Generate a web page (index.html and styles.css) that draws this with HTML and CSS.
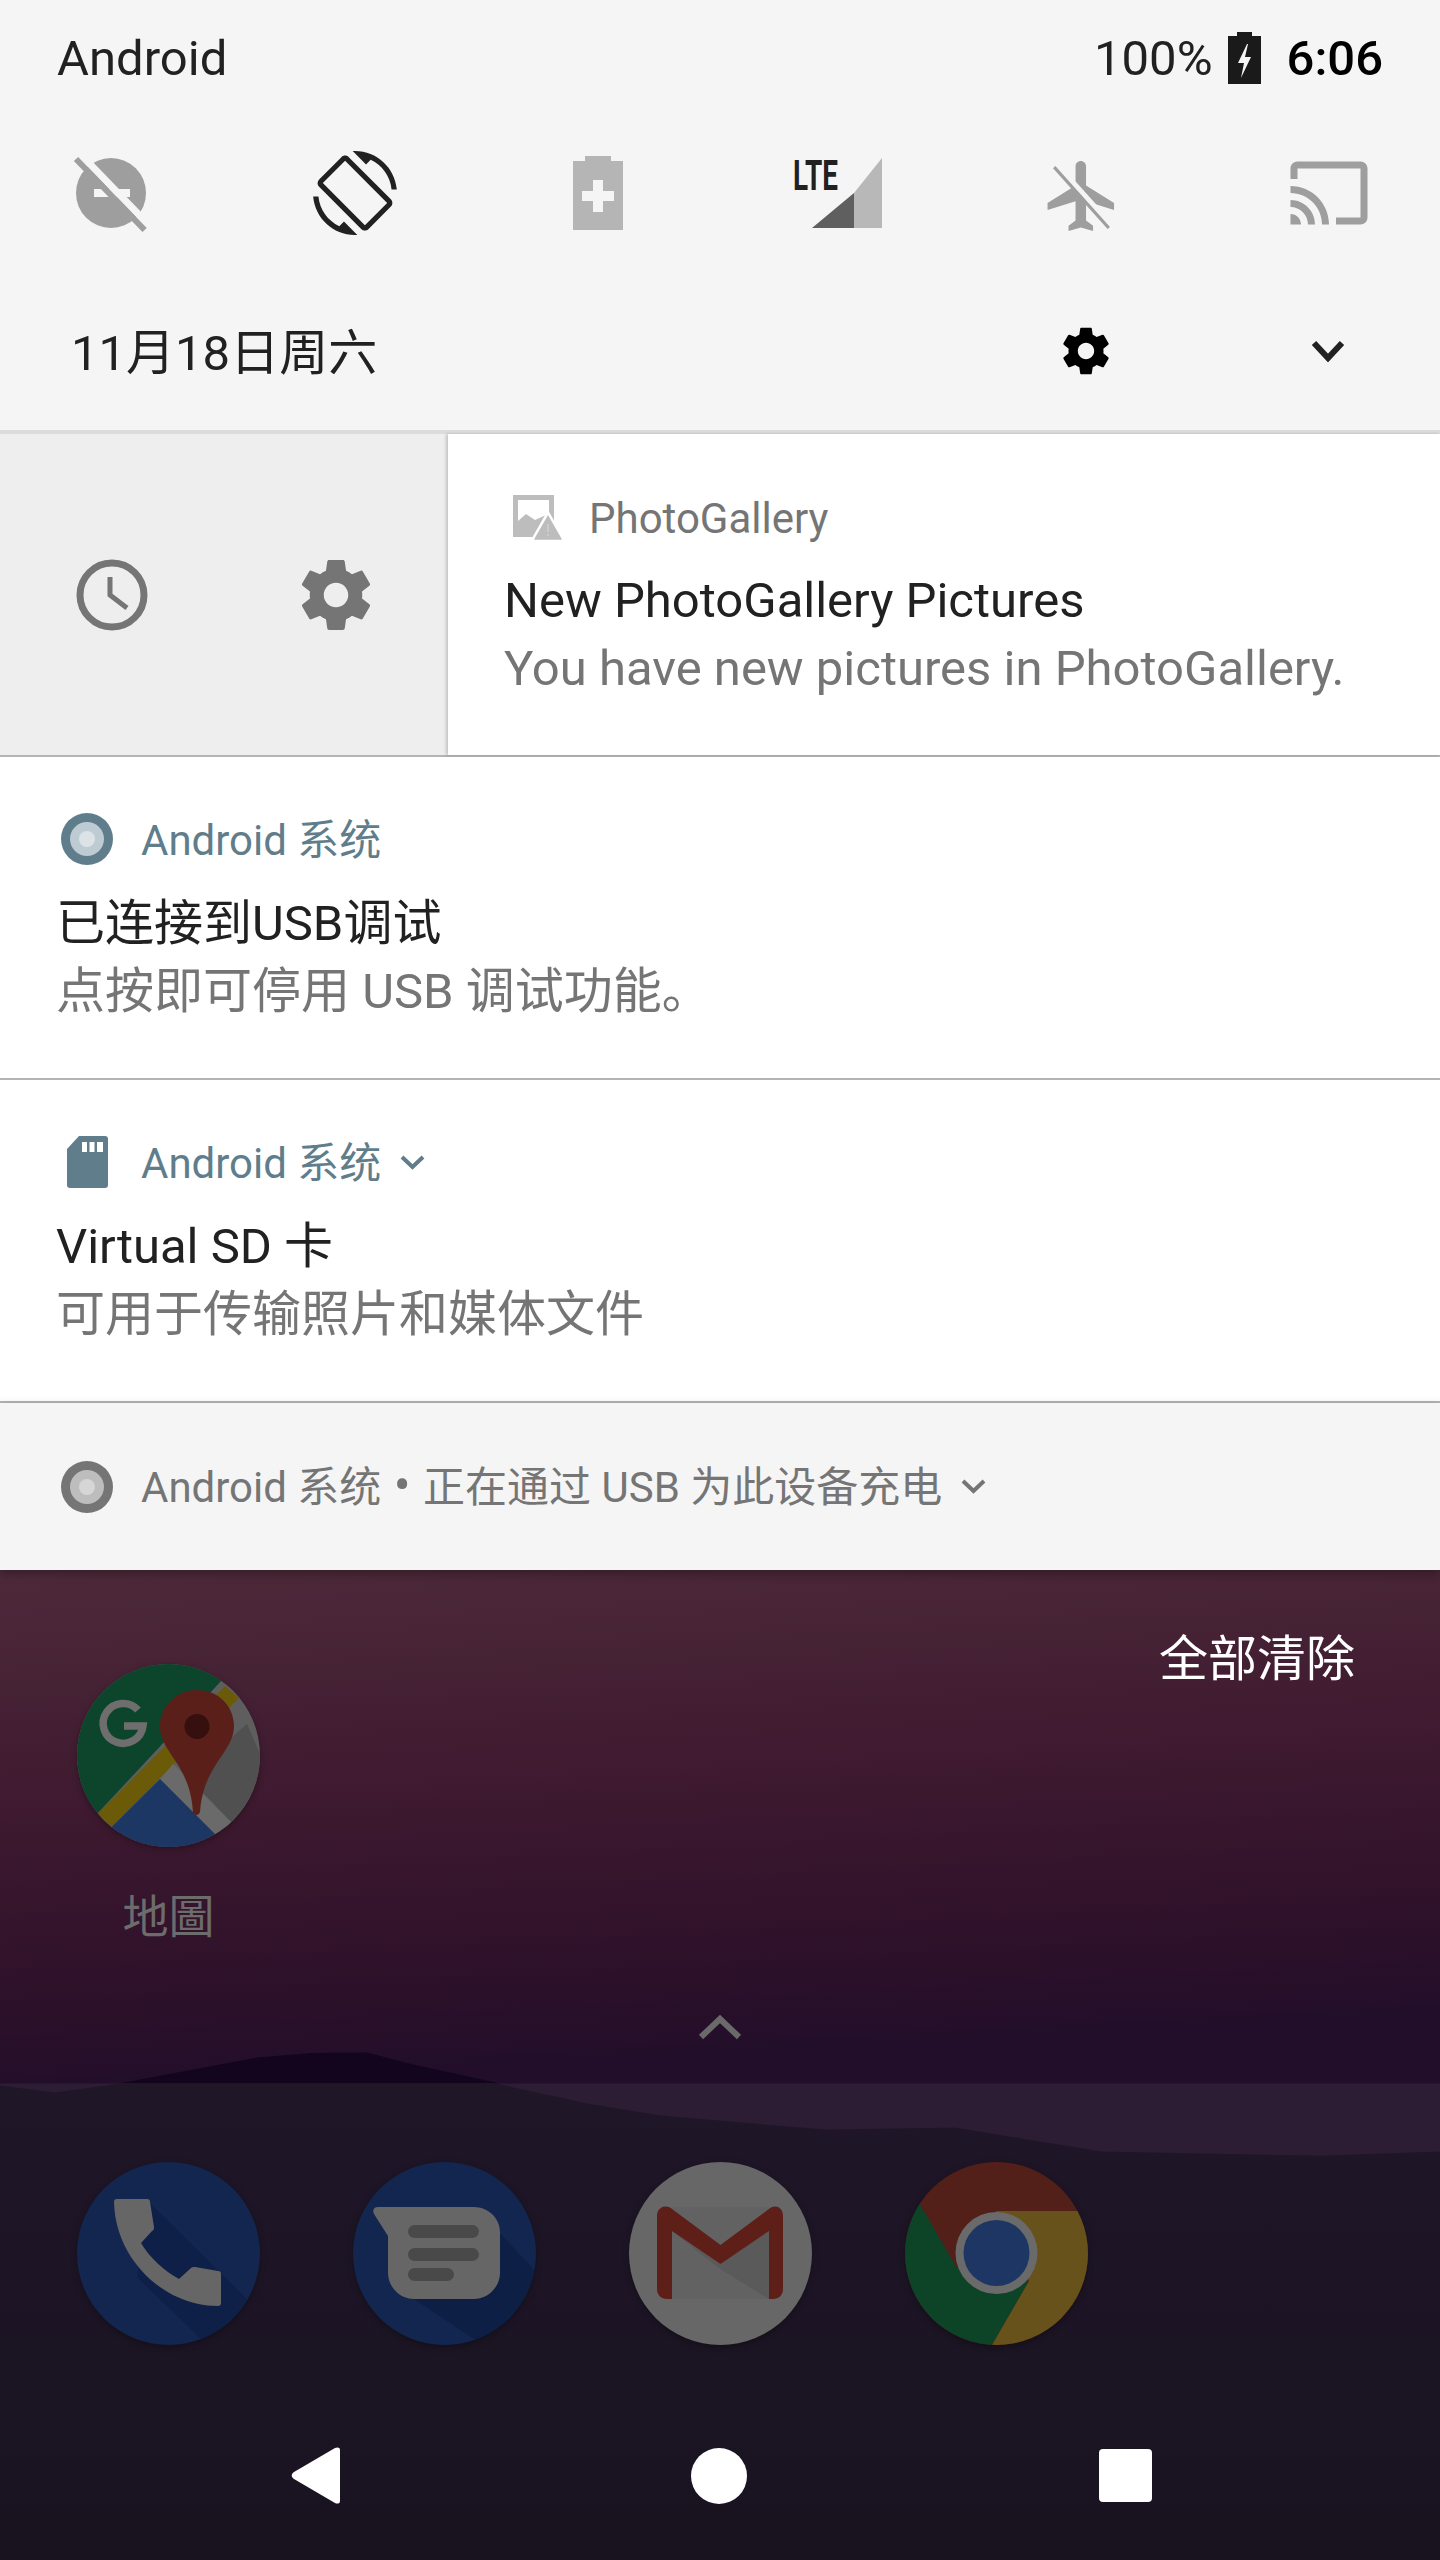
FILE: index.html
```html
<!DOCTYPE html>
<html lang="zh-CN">
<head>
  <meta charset="utf-8">
  <title>Android notification shade</title>
  <link rel="stylesheet" href="styles.css">
</head>
<body>
<div class="phone">

  <!-- quick settings header -->
  <header class="qs">
    <div class="statusbar">
      <span class="carrier">Android</span>
      <span class="status-right">
        <span class="pct">100%</span>
        <svg class="battery" viewBox="0 0 33 52"><path fill="#1a1a1a" d="M9 0h15v4h9v48H0V4h9z"/><path fill="#f5f5f5" d="M19 12l-9 19h6l-3 15 10-21h-6l3-13z"/></svg>
        <span class="clock">6:06</span>
      </span>
    </div>

    <div class="tiles">
      <svg class="tile" viewBox="0 0 84 84">
        <circle cx="42" cy="42" r="35" fill="#9e9e9e"/>
        <rect x="25" y="38" width="36" height="8" fill="#f5f5f5"/>
        <path d="M11.700 3.500L80.300 74.500" stroke="#f5f5f5" stroke-width="7" fill="none"/>
        <path d="M7 8l68.600 71" stroke="#9e9e9e" stroke-width="6" fill="none"/>
      </svg>
      <svg class="tile" viewBox="0 0 24 24"><path fill="#212121" d="M16.48 2.52c3.27 1.55 5.61 4.72 5.97 8.48h1.5C23.44 4.84 18.29 0 12 0l-.66.03 3.81 3.81 1.33-1.32zm-6.25-.77c-.59-.59-1.54-.59-2.12 0L1.75 8.11c-.59.59-.59 1.54 0 2.12l12.02 12.02c.59.59 1.54.59 2.12 0l6.36-6.36c.59-.59.59-1.54 0-2.12L10.23 1.75zm4.6 19.44L2.81 9.17l6.36-6.36 12.02 12.02-6.36 6.36zm-7.31.29C4.25 19.94 1.91 16.76 1.55 13H.05C.56 19.16 5.71 24 12 24l.66-.03-3.81-3.81-1.33 1.32z"/></svg>
      <svg class="tile" viewBox="0 0 84 84">
        <path fill="#b5b5b5" d="M29 5h26v5h12v69H17V10h12z"/>
        <path fill="#f5f5f5" d="M37 29h10v11h11v10H47v11H37V50H26V40h11z"/>
      </svg>
      <svg class="tile tile-lte" viewBox="-10 0 94 84">
        <text class="lte" x="-7" y="38.500" textLength="45" lengthAdjust="spacingAndGlyphs">LTE</text>
        <path fill="#b8b8b8" d="M82 7v70H54V42z"/>
        <path fill="#5f5f5f" d="M54 42v35H12z"/>
      </svg>
      <svg class="tile" viewBox="0 0 24 24">
        <path transform="translate(-.7 .85)" fill="#9e9e9e" d="M21 16v-2l-8-5V3.500c0-.83-.67-1.500-1.500-1.500S10 2.670 10 3.500V9l-8 5v2l8-2.500V19l-2 1.500V22l3.500-1 3.500 1v-1.500L13 19v-5.500l8 2.500z"/>
        <path d="M4 3.900l15.800 17.600" stroke="#f5f5f5" stroke-width="1.500" fill="none"/>
        <path d="M3.200 4.600l15.600 17.400" stroke="#9e9e9e" stroke-width=".9" fill="none"/>
      </svg>
      <svg class="tile" viewBox="0 0 24 24"><path fill="#9e9e9e" d="M21 3H3c-1.100 0-2 .9-2 2v3h2V5h18v14h-7v2h7c1.100 0 2-.9 2-2V5c0-1.100-.9-2-2-2zM1 18v3h3c0-1.660-1.340-3-3-3zm0-4v2c2.760 0 5 2.240 5 5h2c0-3.870-3.130-7-7-7zm0-4v2c4.970 0 9 4.030 9 9h2c0-6.080-4.930-11-11-11z"/></svg>
    </div>

    <div class="dateline">
      <span class="date">11月18日周六</span>
      <svg class="date-gear" viewBox="0 0 24 24"><use href="#gear"/></svg>
      <svg class="date-chev" viewBox="0 0 34 22"><path d="M3 3l14 15L31 3" fill="none" stroke="#212121" stroke-width="6"/></svg>
    </div>
  </header>

  <!-- notification with its gear row showing -->
  <section class="notif notif-guts">
    <div class="guts">
      <svg class="guts-icon" viewBox="0 0 84 84">
        <circle cx="42" cy="42" r="32" fill="none" stroke="#757575" stroke-width="7"/>
        <path d="M40 24v18l17 13" fill="none" stroke="#757575" stroke-width="5"/>
      </svg>
      <svg class="guts-icon" viewBox="0 0 24 24"><use href="#gear" fill="#757575"/></svg>
    </div>
    <div class="notif-card">
      <div class="notif-head head-photo">
        <svg class="photo-icon" viewBox="0 0 50 46">
          <path fill="#bdbdbd" fill-rule="evenodd" d="M0 0h41v42H0zM5 5v32h31V5z"/>
          <path fill="#bdbdbd" d="M5 37V26l8-7 9 6 11-5v17z"/>
          <path fill="#bdbdbd" stroke="#fff" stroke-width="3" stroke-linejoin="round" d="M35 18l16 28H19z"/>
          <path fill="#bdbdbd" d="M35 20l14 24.500H21z"/>
          <rect x="34.300" y="29" width="1.500" height="8" fill="#d0d0d0"/>
          <rect x="34.300" y="39" width="1.500" height="2" fill="#d0d0d0"/>
        </svg>
        <span class="app-grey">PhotoGallery</span>
      </div>
      <div class="notif-title">New PhotoGallery Pictures</div>
      <div class="notif-text">You have new pictures in PhotoGallery.</div>
    </div>
  </section>

  <section class="notif">
    <div class="notif-head">
      <svg class="head-icon" viewBox="0 0 52 52"><circle cx="26" cy="26" r="26" fill="#607d8b"/><circle cx="26" cy="26" r="17" fill="#bfcbd2"/><circle cx="26" cy="26" r="8" fill="#dbe3e6"/></svg>
      <span class="app-blue">Android 系统</span>
    </div>
    <div class="notif-title">已连接到USB调试</div>
    <div class="notif-text">点按即可停用 USB 调试功能。</div>
  </section>

  <section class="notif">
    <div class="notif-head">
      <svg class="head-icon" viewBox="0 0 52 52"><path fill="#607d8b" d="M18 0h26a3 3 0 0 1 3 3v46a3 3 0 0 1-3 3H9a3 3 0 0 1-3-3V13z"/><path fill="#fff" d="M21 6h5v10h-5zM28.500 6h5v10h-5zM36 6h6v10h-6z"/></svg>
      <span class="app-blue">Android 系统</span>
      <svg class="head-chev" viewBox="0 0 25 15"><path d="M2 2l10.500 10L23 2" fill="none" stroke="#607d8b" stroke-width="4"/></svg>
    </div>
    <div class="notif-title">Virtual SD 卡</div>
    <div class="notif-text">可用于传输照片和媒体文件</div>
  </section>

  <section class="footer-row">
    <svg class="head-icon" viewBox="0 0 52 52"><circle cx="26" cy="26" r="26" fill="#757575"/><circle cx="26" cy="26" r="17" fill="#bdbdbd"/><circle cx="26" cy="26" r="8" fill="#d6d6d6"/></svg>
    <span class="app-grey">Android 系统 <span class="dot">•</span> 正在通过 USB 为此设备充电</span>
    <svg class="head-chev" viewBox="0 0 25 15"><path d="M2 2l10.500 10L23 2" fill="none" stroke="#757575" stroke-width="4"/></svg>
  </section>

  <!-- launcher behind the shade -->
  <main class="home">
    <svg class="wallpaper" viewBox="0 0 1440 989" preserveAspectRatio="none">
      <defs>
        <linearGradient id="sky" x1="0" y1="0" x2=".15" y2="1">
          <stop offset="0" stop-color="#4d2a3a"/>
          <stop offset=".45" stop-color="#3f1a30"/>
          <stop offset=".84" stop-color="#2c1029"/>
          <stop offset="1" stop-color="#220e2a"/>
        </linearGradient>
        <linearGradient id="ground" x1="0" y1="0" x2="0" y2="1">
          <stop offset="0" stop-color="#1f1628"/>
          <stop offset="1" stop-color="#191320"/>
        </linearGradient>
      </defs>
      <rect width="1440" height="513" fill="url(#sky)"/>
      <path fill="#12051d" d="M119 513L257 487 312 482.500 367 482 413 494 500 513z"/>
      <rect y="513" width="1440" height="476" fill="#2c1d35"/>
      <path fill="url(#ground)" d="M0 515L55 522 120 513H496L588 533 661 545 826 559 955 557 1102 581 1322 585 1440 581V989H0z"/>
    </svg>

    <button class="clear-all">全部清除</button>

    <div class="maps-cell">
      <svg class="app" viewBox="0 0 183 183">
        <defs><clipPath id="mapclip"><circle cx="91.500" cy="91.500" r="91.500"/></clipPath></defs>
        <g clip-path="url(#mapclip)">
          <rect width="183" height="183" fill="#5e5e5e"/>
          <path fill="#0d452c" d="M0 0h160L20 150H0z"/>
          <path fill="#6b5a07" d="M148 22l14 12L34.700 163 20.300 150z"/>
          <path fill="#505050" d="M170 60l13 30v50l-28 19-45-47z"/>
          <path fill="#6a6a6a" d="M96 100l59 59-17 12-55-56z"/>
          <path fill="#1d3764" d="M83 115l55 55v13H20l14.700-20z"/>
        </g>
        <path d="M61 46A20 20 0 1 0 66 62H47" fill="none" stroke="#6e6e6e" stroke-width="7.500"/>
        <path fill="#591f18" d="M120 26c-20 0-37 16-37 36 0 27 30 37 33 86 0 4 6 4 7 0 3-47 34-60 34-86 0-20-16-36-37-36z"/>
        <circle cx="120" cy="62.500" r="12.500" fill="#35100e"/>
      </svg>
      <span class="app-label">地圖</span>
    </div>

    <div class="shelf">
      <svg class="shelf-arrow" viewBox="0 0 44 26"><path d="M3 23L22 5l19 18" fill="none" stroke="#6a6a6a" stroke-width="6"/></svg>
    </div>

    <div class="dock">
      <svg class="app" viewBox="0 0 183 183">
        <defs><clipPath id="roundclip"><circle cx="91.500" cy="91.500" r="91.500"/></clipPath></defs>
        <circle cx="91.500" cy="91.500" r="91.500" fill="#13264f"/>
        <path clip-path="url(#roundclip)" fill="#0f2048" d="M72 40l111 110v33h-53L60 115z"/>
        <path fill="#666" d="M40 37h30c2 0 3 1 3 3l4 25c0 2 0 3-2 4L64 81c9 15 22 27 38 36l12-11c1-1 2-1 4-1l23 4c2 0 3 1 3 3v29c0 2-1 3-3 3C86 144 38 96 37 40c0-2 1-3 3-3z"/>
      </svg>
      <svg class="app" viewBox="0 0 183 183">
        <circle cx="91.500" cy="91.500" r="91.500" fill="#13264f"/>
        <path clip-path="url(#roundclip)" fill="#0e1f45" d="M146 70l37 40v73h-53L61 137z"/>
        <path fill="#666" d="M25 45h96c14 0 26 11 26 25v41c0 14-12 26-26 26H61c-14 0-26-12-26-26V74L21 52c-2-4 0-7 4-7z"/>
        <rect x="55" y="63" width="71" height="13" rx="6.500" fill="#494949"/>
        <rect x="55" y="86" width="71" height="13" rx="6.500" fill="#494949"/>
        <rect x="55" y="106" width="46" height="13" rx="6.500" fill="#494949"/>
      </svg>
      <svg class="app" viewBox="0 0 183 183">
        <circle cx="91.500" cy="91.500" r="91.500" fill="#676767"/>
        <path fill="#626262" d="M43 45h97v92H43z"/>
        <path fill="#5a5a5a" d="M43 69l48.500 33L140 69v68L91 107z"/>
        <path fill="#5e1f19" d="M28 54c0-9 9-12 15-7l48.500 36L140 47c6-5 14-2 14 7v73c0 6-4 10-10 10h-4V69l-48.500 33L43 69v68h-5c-6 0-10-4-10-10z"/>
      </svg>
      <svg class="app" viewBox="0 0 183 183">
        <g clip-path="url(#roundclip)">
          <rect width="183" height="183" fill="#532019"/>
          <path fill="#0d4327" d="M14.600 41.700L52 106l72 13-37 64H0V42z"/>
          <path fill="#66521a" d="M91 49h92v134H87l37-64z"/>
        </g>
        <circle cx="91.500" cy="91" r="41" fill="#6a6a6a"/>
        <circle cx="91.500" cy="91" r="33" fill="#1d3664"/>
      </svg>
    </div>

    <nav class="navbar">
      <svg class="nav-back" viewBox="0 0 50 57"><path fill="#fff" d="M49 3v51c0 3-3 3-5 2L3 32c-3-2-3-5 0-7L44 1c2-1 5-1 5 2z"/></svg>
      <span class="nav-home"></span>
      <span class="nav-recent"></span>
    </nav>
  </main>

  <svg class="defs-only" viewBox="0 0 24 24"><defs>
    <path id="gear" d="M19.430 12.980c.04-.32.07-.64.07-.98s-.03-.66-.07-.98l2.110-1.650c.19-.15.24-.42.12-.64l-2-3.460c-.12-.22-.39-.3-.61-.22l-2.490 1c-.52-.4-1.080-.73-1.690-.98l-.38-2.650C14.460 2.180 14.250 2 14 2h-4c-.25 0-.46.18-.49.42l-.38 2.650c-.61.25-1.170.59-1.690.98l-2.490-1c-.23-.09-.49 0-.61.22l-2 3.460c-.13.22-.07.49.12.64l2.110 1.650c-.04.32-.07.65-.07.98s.03.66.07.98l-2.110 1.650c-.19.15-.24.42-.12.64l2 3.460c.12.22.39.3.61.22l2.490-1c.52.4 1.080.73 1.690.98l.38 2.650c.03.24.24.42.49.42h4c.25 0 .46-.18.49-.42l.38-2.650c.61-.25 1.170-.59 1.690-.98l2.490 1c.23.09.49 0 .61-.22l2-3.460c.12-.22.07-.49-.12-.64l-2.110-1.650zM12 15.500c-1.930 0-3.500-1.570-3.500-3.500s1.570-3.500 3.500-3.500 3.500 1.570 3.500 3.500-1.570 3.500-3.500 3.500z"/>
  </defs></svg>

</div>
</body>
</html>
```

FILE: styles.css
```css
* {
  box-sizing: border-box;
}

html,
body {
  margin: 0;
  padding: 0;
}

body {
  font-family: Roboto, "Noto Sans CJK SC", sans-serif;
  color: #212121;
  background: #191320;
}

svg {
  display: block;
  flex: none;
}

.phone {
  width: 1440px;
  height: 2560px;
  display: flex;
  flex-direction: column;
  overflow: hidden;
}

.defs-only {
  width: 0;
  height: 0;
}

/* header */
.qs {
  height: 434px;
  background: #f5f5f5;
  border-bottom: 4px solid #dcdcdc;
}

.statusbar {
  height: 116px;
  padding: 0 57px;
  display: flex;
  justify-content: space-between;
  align-items: center;
  font-size: 49px;
  line-height: 57px;
}

.status-right {
  display: flex;
  align-items: center;
}

.pct {
  color: #212121;
}

.battery {
  width: 33px;
  height: 52px;
  margin: 0 26px 0 15px;
}

.clock {
  font-weight: 500;
  color: #000;
}

.tiles {
  height: 84px;
  margin-top: 35px;
  padding: 0 69px;
  display: flex;
  justify-content: space-between;
}

.tile {
  width: 84px;
  height: 84px;
}

.tile-lte {
  width: 94px;
  margin-left: -10px;
}

.lte {
  font-family: Roboto, sans-serif;
  font-size: 42px;
  font-weight: 700;
  fill: #212121;
}

.dateline {
  height: 56px;
  margin-top: 88px;
  padding-left: 71px;
  display: flex;
  align-items: center;
  font-size: 49px;
}

.date {
  flex: 1;
  margin-bottom: 6px;
}

.date-gear {
  width: 56px;
  height: 56px;
  margin-right: 197px;
}

.date-chev {
  width: 34px;
  height: 22px;
  margin-right: 95px;
}

/* notifications */
.notif {
  height: 323px;
  padding: 0 56px;
  background: #fff;
  border-bottom: 2px solid #b4b4b4;
  display: flex;
  flex-direction: column;
}

.notif-guts {
  padding: 0;
  flex-direction: row;
  background: #eee;
}

.guts {
  width: 448px;
  padding: 0 70px;
  display: flex;
  align-items: center;
  gap: 140px;
}

.guts-icon {
  width: 84px;
  height: 84px;
}

.notif-card {
  flex: 1;
  padding-left: 56px;
  background: #fff;
  box-shadow: -2px 0 3px rgba(0, 0, 0, .18);
}

.notif-head {
  height: 52px;
  margin-top: 56px;
  display: flex;
  align-items: center;
  font-size: 42px;
}

.head-photo {
  margin-top: 58px;
}

.head-photo + .notif-title {
  margin-top: 28px;
}

.head-icon {
  width: 52px;
  height: 52px;
  margin-left: 5px;
  margin-right: 28px;
}

.photo-icon {
  width: 50px;
  height: 46px;
  margin-left: 9px;
  margin-right: 26px;
}

.app-blue {
  margin-bottom: 5px;
  color: #607d8b;
}

.app-grey {
  color: #757575;
}

.footer-row .app-grey {
  margin-bottom: 7px;
}

.dot {
  margin: 0 2px;
  font-size: 50px;
  line-height: 1;
}

.head-chev {
  width: 25px;
  height: 15px;
  margin-left: 19px;
}

.notif-title {
  margin-top: 30px;
  font-size: 49px;
  line-height: 57px;
  color: #212121;
}

.notif-text {
  margin-top: 11px;
  font-size: 49px;
  line-height: 57px;
  color: #757575;
}

.footer-row {
  position: relative;
  height: 167px;
  padding-left: 56px;
  background: #f5f5f5;
  box-shadow: 0 4px 10px rgba(0, 0, 0, .3);
  z-index: 1;
  display: flex;
  align-items: center;
  font-size: 42px;
}

/* launcher */
.home {
  position: relative;
  flex: 1;
  display: flex;
  flex-direction: column;
}

.wallpaper {
  position: absolute;
  left: 0;
  top: 0;
  width: 100%;
  height: 100%;
}

.clear-all {
  position: relative;
  align-self: flex-end;
  margin: 61px 85px 0 0;
  padding: 0;
  border: 0;
  background: none;
  color: #fff;
  font-family: Roboto, "Noto Sans CJK SC", sans-serif;
  font-size: 49px;
  line-height: 58px;
}

.maps-cell {
  position: relative;
  width: 183px;
  margin-left: 77px;
  margin-top: -25px;
  display: flex;
  flex-direction: column;
  align-items: center;
}

.app {
  width: 183px;
  height: 183px;
  filter: drop-shadow(0 2px 3px rgba(0, 0, 0, .3));
}

.app-label {
  margin-top: 34px;
  font-family: "Noto Sans CJK TC", sans-serif;
  font-size: 46px;
  line-height: 64px;
  color: #6c6c6c;
}

.shelf {
  position: relative;
  margin-top: 69px;
  display: flex;
  justify-content: center;
}

.shelf-arrow {
  width: 44px;
  height: 26px;
}

.dock {
  position: relative;
  margin-top: 122px;
  padding-left: 77px;
  display: flex;
  gap: 93px;
}

.navbar {
  position: relative;
  margin-top: 102px;
  height: 57px;
  display: flex;
  align-items: center;
}

.nav-back {
  width: 50px;
  height: 57px;
  margin-left: 291px;
}

.nav-home {
  width: 56px;
  height: 56px;
  margin-left: 350px;
  border-radius: 50%;
  background: #fff;
}

.nav-recent {
  width: 53px;
  height: 53px;
  margin-left: 352px;
  border-radius: 4px;
  background: #fff;
}
```
